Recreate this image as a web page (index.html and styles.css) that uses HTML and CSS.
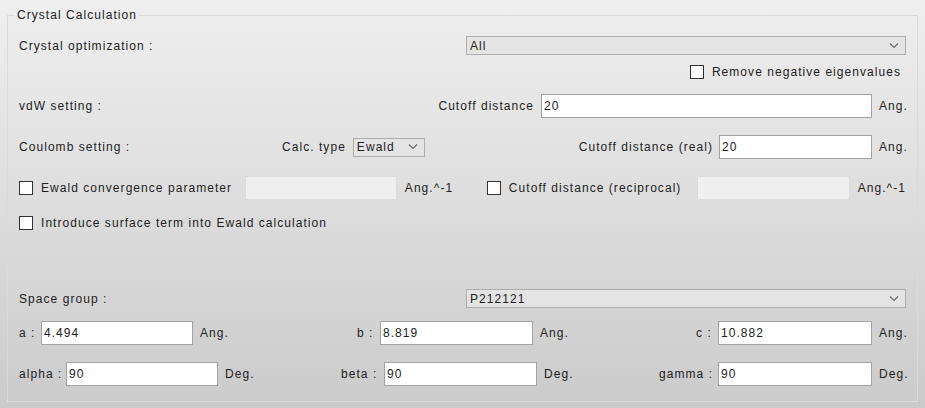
FILE: index.html
```html
<!DOCTYPE html>
<html>
<head>
<meta charset="utf-8">
<link rel="stylesheet" href="styles.css">
</head>
<body>
<fieldset class="group">
  <legend class="title">Crystal Calculation</legend>

  <div class="row r1">
    <span class="grow">Crystal optimization :</span>
    <div class="combo wide"><span>All</span><svg class="chev" width="10" height="6" viewBox="0 0 10 6"><path d="M1 0.5 L5 4.5 L9 0.5" /></svg></div>
  </div>

  <div class="row r2 end">
    <label class="chk"><span class="box"></span><span>Remove negative eigenvalues</span></label>
  </div>

  <div class="row r3">
    <span class="grow">vdW setting :</span>
    <span class="pre">Cutoff distance</span>
    <input class="field w330" value="20">
    <span class="unit">Ang.</span>
  </div>

  <div class="row r4">
    <span class="coul">Coulomb setting :</span>
    <span class="pre">Calc. type</span>
    <div class="combo small"><span>Ewald</span><svg class="chev" width="10" height="6" viewBox="0 0 10 6"><path d="M1 0.5 L5 4.5 L9 0.5" /></svg></div>
    <span class="grow"></span>
    <span class="pre6">Cutoff distance (real)</span>
    <input class="field w153" value="20">
    <span class="unit">Ang.</span>
  </div>

  <div class="row r5">
    <label class="chk c226"><span class="box"></span><span>Ewald convergence parameter</span></label>
    <input class="field w152 off" disabled>
    <span class="unit2 u90">Ang.^-1</span>
    <label class="chk c210"><span class="box"></span><span>Cutoff distance (reciprocal)</span></label>
    <input class="field w153 off" disabled>
    <span class="unit2">Ang.^-1</span>
  </div>

  <div class="row r6">
    <label class="chk"><span class="box"></span><span>Introduce surface term into Ewald calculation</span></label>
  </div>

  <div class="row r7">
    <span class="grow">Space group :</span>
    <div class="combo wide"><span>P212121</span><svg class="chev" width="10" height="6" viewBox="0 0 10 6"><path d="M1 0.5 L5 4.5 L9 0.5" /></svg></div>
  </div>

  <div class="row r8">
    <div class="seg s338">
      <span class="plbl l22">a :</span><input class="field w152" value="4.494"><span class="unit">Ang.</span>
    </div>
    <div class="seg s339">
      <span class="plbl l23">b :</span><input class="field w153" value="8.819"><span class="unit">Ang.</span>
    </div>
    <div class="seg grow">
      <span class="plbl l22">c :</span><input class="field w154" value="10.882"><span class="unit">Ang.</span>
    </div>
  </div>

  <div class="row r9">
    <div class="seg s322">
      <span class="plbl l47">alpha :</span><input class="field w152" value="90"><span class="unit">Deg.</span>
    </div>
    <div class="seg s318">
      <span class="plbl l43">beta :</span><input class="field w153" value="90"><span class="unit">Deg.</span>
    </div>
    <div class="seg grow">
      <span class="plbl l59">gamma :</span><input class="field w154" value="90"><span class="unit">Deg.</span>
    </div>
  </div>
</fieldset>
</body>
</html>
```

FILE: styles.css
```css
html, body {
  margin: 0;
  height: 100%;
  overflow: hidden;
}
body {
  box-sizing: border-box;
  width: 925px;
  height: 408px;
  padding: 8px 7px 6px 7px;
  background: linear-gradient(to bottom, #efefef 0%, #cbcbcb 100%);
  font-family: "Liberation Sans", Arial, sans-serif;
  font-size: 12px;
  letter-spacing: 1.05px;
  color: #222;
}
.group {
  margin: 0;
  padding: 0 11px 15px 11px;
  border: 1px solid #dadada;
  min-width: 0;
  height: 394px;
  box-sizing: border-box;
}
.title {
  margin-left: -4px;
  padding: 0 2px;
  line-height: 14px;
  height: 14px;
}
.row {
  display: flex;
  align-items: center;
  white-space: nowrap;
}
.row.end { justify-content: flex-end; }
.grow { flex: 1 1 auto; }
.r1 { margin-top: 14px; height: 19px; }
.r2 { margin-top: 8px; height: 18px; padding-right: 5px; }
.r3 { margin-top: 13px; height: 24px; }
.r4 { margin-top: 17px; height: 24px; }
.r5 { margin-top: 17px; height: 24px; }
.r6 { margin-top: 13px; height: 19px; }
.r7 { margin-top: 57px; height: 19px; }
.r8 { margin-top: 13px; height: 24px; }
.r9 { margin-top: 17px; height: 24px; }

.combo {
  box-sizing: border-box;
  height: 19px;
  background: #e4e4e4;
  border: 1px solid #adadad;
  display: flex;
  align-items: center;
  justify-content: space-between;
  padding: 0 6px 0 3px;
}
.combo.wide { width: 440px; }
.combo.small { width: 72px; }
.chev path {
  fill: none;
  stroke: #6a6a6a;
  stroke-width: 1.1;
}

.chk {
  display: flex;
  align-items: center;
}
.box {
  box-sizing: border-box;
  width: 14px;
  height: 14px;
  background: #fff;
  border: 1px solid #333;
  margin-right: 8px;
  flex: none;
}
.c226 { width: 226px; }
.c210 { width: 210px; }

.pre { margin-right: 7px; }
.pre6 { margin-right: 6px; }
.coul { width: 263px; }

.field {
  box-sizing: border-box;
  height: 24px;
  margin: 0;
  padding: 0 2px;
  border: 1px solid #a3a3a3;
  background: #fff;
  font: inherit;
  letter-spacing: inherit;
  color: #222;
  outline: none;
  flex: none;
}
.field.off {
  background: #efefef;
  border-color: #dcdcdc;
}
.w330 { width: 331px; }
.w152 { width: 152px; }
.w153 { width: 153px; }
.w154 { width: 154px; }

.unit {
  box-sizing: border-box;
  width: 34px;
  padding-left: 7px;
  flex: none;
}
.unit2 {
  box-sizing: border-box;
  padding-left: 8px;
  flex: none;
}
.u90 { width: 90px; }

.seg {
  display: flex;
  align-items: center;
  flex: none;
}
.seg.grow { flex: 1 1 auto; }
.s338 { width: 338px; }
.s339 { width: 339px; }
.s322 { width: 322px; }
.s318 { width: 318px; }
.plbl { flex: none; }
.l22 { width: 22px; }
.l23 { width: 23px; }
.l47 { width: 47px; }
.l43 { width: 43px; }
.l59 { width: 59px; }
```
